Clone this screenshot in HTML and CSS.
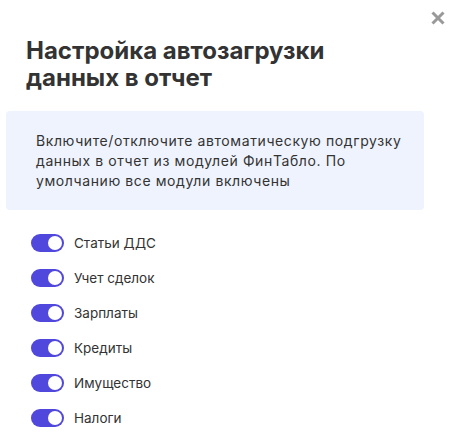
FILE: index.html
```html
<!DOCTYPE html>
<html>
	<head>
		<meta charset="UTF-8">
		<title>Настройка автозагрузки</title>
		<link rel="stylesheet" href="styles.css">
	</head>
	<body>
		<div class="modal">
			<button class="close" type="button" aria-label="Закрыть">
				<svg width="14" height="14" viewBox="0 0 14 14">
					<path d="M1.5 1.5L12.5 12.5M12.5 1.5L1.5 12.5" stroke="#999" stroke-width="3" stroke-linecap="butt"/>
				</svg>
			</button>
			<h2 class="title">Настройка автозагрузки<br>данных в отчет</h2>
			<div class="info">Включите/отключите автоматическую подгрузку<br>данных в отчет из модулей ФинТабло. По<br>умолчанию все модули включены</div>
			<ul class="list">
				<li class="row"><span class="switch on"></span><span class="label">Статьи ДДС</span></li>
				<li class="row"><span class="switch on"></span><span class="label">Учет сделок</span></li>
				<li class="row"><span class="switch on"></span><span class="label">Зарплаты</span></li>
				<li class="row"><span class="switch on"></span><span class="label">Кредиты</span></li>
				<li class="row"><span class="switch on"></span><span class="label">Имущество</span></li>
				<li class="row"><span class="switch on"></span><span class="label">Налоги</span></li>
			</ul>
		</div>
	</body>
</html>
```

FILE: styles.css
```css
html{
	overflow: hidden;
}
body{
	margin: 0;
	background: #fff;
	font-family: Inter, "Noto Sans", sans-serif;
	color: #333;
}
.modal{
	position: relative;
	width: 398px;
	padding: 0 30px 0 26px;
}
.close{
	position: absolute;
	top: 11px;
	left: 431px;
	width: 14px;
	height: 14px;
	padding: 0;
	border: none;
	background: none;
	display: block;
}
.close svg{
	display: block;
}
.title{
	margin: 0;
	padding-top: 37px;
	font-size: 24px;
	line-height: 27px;
	font-weight: 700;
	color: #333;
}
.info{
	margin: 20px 0 0 -20px;
	padding: 20px 30px 19px 30px;
	background: #eff3fe;
	border-radius: 4px;
	font-size: 14px;
	letter-spacing: 0.6px;
	line-height: 20px;
	white-space: nowrap;
	color: #333;
}
.list{
	list-style: none;
	margin: 15px 0 0 5px;
	padding: 0;
}
.row{
	display: flex;
	align-items: center;
	height: 35px;
	gap: 10px;
}
.switch{
	position: relative;
	display: block;
	width: 33px;
	height: 18px;
	border-radius: 9px;
	background: #ccc;
}
.switch::after{
	content: "";
	position: absolute;
	top: 2px;
	left: 2px;
	width: 14px;
	height: 14px;
	border-radius: 50%;
	background: #fff;
}
.switch.on{
	background: #5048dc;
}
.switch.on::after{
	left: 17px;
}
.label{
	font-size: 13.5px;
	line-height: 20px;
	color: #333;
}
```
